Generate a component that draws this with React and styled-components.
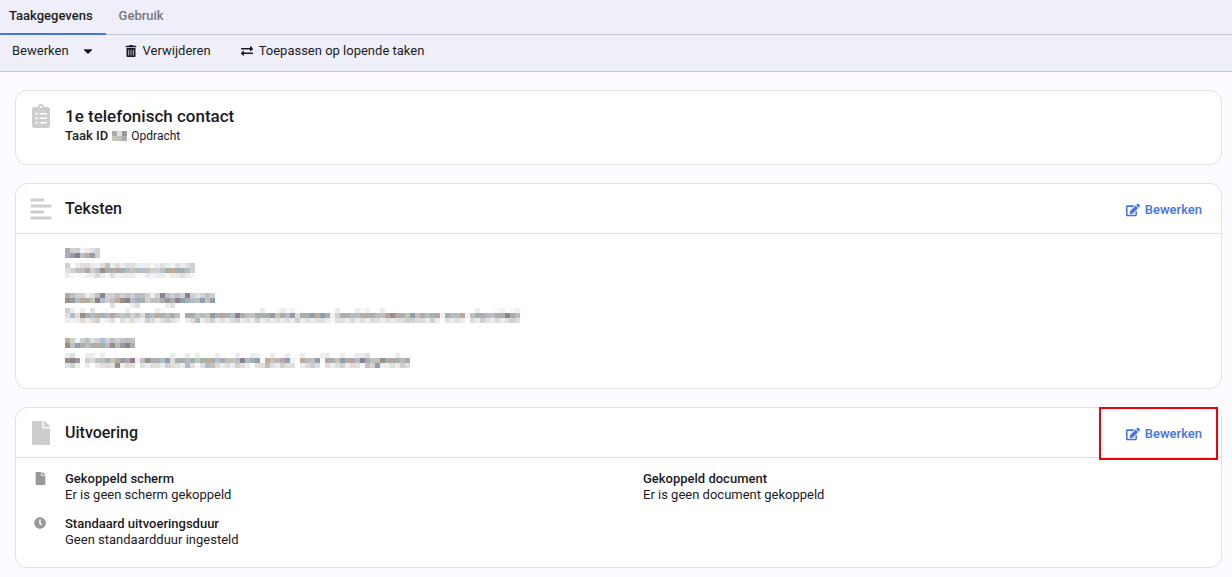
import React from "react";
import styled, { createGlobalStyle } from "styled-components";
import {
  FaAlignLeft,
  FaCaretDown,
  FaClipboardList,
  FaClock,
  FaEdit,
  FaExchangeAlt,
  FaFile,
  FaTrashAlt,
} from "react-icons/fa";

const GlobalStyle = createGlobalStyle`
  * {
    box-sizing: border-box;
  }

  body {
    margin: 0;
    background: #fdfbff;
    color: #1b1b1f;
    font-family: Roboto, "Liberation Sans", sans-serif;
    font-size: 13px;
    line-height: 16px;
  }
`;

const TabBar = styled.nav`
  display: flex;
  height: 35px;
  background: #efeffa;
  border-bottom: 1px solid #c5c6d0;
`;

const Tab = styled.button`
  height: 35px;
  padding: 0 13px 2px;
  border: 0;
  border-bottom: 2px solid ${({ $active }) => ($active ? "#4573df" : "transparent")};
  background: none;
  color: ${({ $active }) => ($active ? "#1b1b1f" : "#77777a")};
  font: inherit;
  font-weight: 500;
  cursor: pointer;

  &:first-child {
    padding-left: 9px;
  }
`;

const Toolbar = styled.div`
  display: flex;
  align-items: center;
  gap: 30px;
  height: 37px;
  padding: 0 12px 4px;
  background: #efeffa;
  border-bottom: 1px solid #c5c6d0;
`;

const ToolButton = styled.button`
  display: flex;
  align-items: center;
  gap: ${({ $gap }) => $gap || 6}px;
  padding: 0;
  border: 0;
  background: none;
  color: inherit;
  font: inherit;
  cursor: pointer;
`;

const Page = styled.main`
  display: flex;
  flex-direction: column;
  gap: 18px;
  padding: 18px 10px 9px 15px;
`;

const Card = styled.section`
  position: relative;
  background: #fff;
  border: 1px solid #e1e1ec;
  border-radius: 12px;
`;

const CardHeader = styled.header`
  display: flex;
  align-items: center;
  height: 50px;
  padding-right: 19px;
  border-bottom: 1px solid #e1e1ec;
`;

const IconCell = styled.span`
  display: flex;
  flex: none;
  justify-content: center;
  width: 49px;
  color: #cdcdcd;
`;

const FieldIcon = styled(IconCell)`
  padding: 1px 1px 0 0;
  color: #999;
`;

const Title = styled.h2`
  flex: 1;
  margin: 0;
  font-size: ${({ $large }) => ($large ? 17 : 16)}px;
  font-weight: 500;
  line-height: 20px;
`;

const EditButton = styled.button`
  display: flex;
  align-items: center;
  gap: 5px;
  padding: 3px 0 0;
  border: 0;
  background: none;
  color: #4573df;
  font: inherit;
  font-weight: 500;
  cursor: pointer;
`;

const Summary = styled.div`
  display: flex;
  padding: 13px 0 18px;
`;

const SummaryText = styled.div`
  padding-top: 2px;
`;

const Meta = styled.div`
  display: flex;
  align-items: center;
  gap: 4px;
  font-size: 12px;
  line-height: 20px;
`;

const Strong = styled.strong`
  font-size: 13px;
  font-weight: 500;
`;

const TextFields = styled.div`
  display: flex;
  flex-direction: column;
  gap: 15px;
  padding: 14px 16px 20px 49px;
`;

const TextField = styled.div`
  display: flex;
  flex-direction: column;
  gap: 5px;
`;

const Mosaic = styled.svg`
  display: block;
  overflow: visible;
`;

const Fields = styled.div`
  display: grid;
  grid-template-columns: 49px 1fr 1fr;
  row-gap: 13px;
  padding: 13px 0 19px;
`;

const Field = styled.dl`
  margin: 0;

  dt {
    font-weight: 500;
  }

  dd {
    margin: 0;
  }
`;

const Highlight = styled.div`
  position: absolute;
  top: -1px;
  right: 3px;
  width: 119px;
  height: 53px;
  border: 2px solid #f00000;
  pointer-events: none;
`;

const TONES = {
  w: "#fbf7f2",
  c: "#edf2f8",
  1: "#ececec",
  2: "#dfdfe0",
  3: "#cfd0d2",
  4: "#c0c0c0",
  5: "#adadae",
  6: "#99999d",
  B: "#b3bdca",
  b: "#8f9fb0",
  T: "#e2dad4",
  t: "#c0aa98",
  p: "#8d8090",
  r: "#b8a5a3",
  g: "#a3b1b1",
  n: "#9a9082",
  y: "#c8c4b4",
};

const CELL = 5;

// redacted text, one character per block
const Redacted = ({ rows, lines = 2 }) => (
  <Mosaic
    width={rows[0].length * CELL}
    height={lines * CELL}
    shapeRendering="crispEdges"
    aria-hidden="true"
  >
    {rows.map((row, y) =>
      [...row].map((tone, x) =>
        TONES[tone] ? (
          <rect
            key={`${x}-${y}`}
            x={x * CELL}
            y={y * CELL}
            width={CELL}
            height={CELL}
            fill={TONES[tone]}
          />
        ) : null
      )
    )}
  </Mosaic>
);

const redactedId = ["526", "y45"];

const redactedFields = [
  {
    label: ["533c123", "5bp4tb3"],
    value: [
      "3.12T1c241T1221c1w121c2123",
      "2344r3Bng5rgByBB4334gtg5B3",
      "1w.wc1T1w2c111ww1c11w1121w",
    ],
  },
  {
    label: [
      "5433124p3343y3B4313p4343p32343",
      "n6BtgypB34tnpB5g344565pbgB4byb",
      ".........2...12.....12........",
    ],
    value: [
      "31.1.2..w...1.....1w...................1..w1wc........1...1wc..1..................1...wc.wc",
      "2BTngBtgBrByB34T5BtgB54.rgyByb5rgBp5445g56y5BbTg5btb5c355BBtg5B4rnr5yb45Bgrc5BBtc4g5B4g5p5B",
      "1c1T1T3w12w21T1c3T12321.1TB1T3121T3121312121213121221w221T121T212122332T131.2121.21321T1232",
    ],
  },
  {
    label: ["t3c3423B3434B4", "n4b5BgtgBnB6p5"],
    value: [
      "12..11.1.............1..1.1...1...1..1c..1..1.w1...11..1..112.....1..",
      "np6.3T44gytbrpc4n5gBbTg5Bgygt5B54yBpBgb.tyBrbc.tB4b.rgyb5rBpg44ngrgBr",
      "231.1.12T2n1T2.212213T21B2w2B4T121321.2T421322.1T32.T1231T2w436112132",
    ],
  },
];

const App = () => {
  return (
    <>
      <GlobalStyle />
      <TabBar>
        <Tab $active>Taakgegevens</Tab>
        <Tab>Gebruik</Tab>
      </TabBar>
      <Toolbar>
        <ToolButton $gap={12}>
          Bewerken
          <FaCaretDown size={14} />
        </ToolButton>
        <ToolButton>
          <FaTrashAlt size={12} />
          Verwijderen
        </ToolButton>
        <ToolButton>
          <FaExchangeAlt size={12} />
          Toepassen op lopende taken
        </ToolButton>
      </Toolbar>
      <Page>
        <Card>
          <Summary>
            <IconCell>
              <FaClipboardList size={24} />
            </IconCell>
            <SummaryText>
              <Title $large>1e telefonisch contact</Title>
              <Meta>
                <Strong>Taak ID</Strong>
                <Redacted rows={redactedId} />
                <span>Opdracht</span>
              </Meta>
            </SummaryText>
          </Summary>
        </Card>

        <Card>
          <CardHeader>
            <IconCell>
              <FaAlignLeft size={24} />
            </IconCell>
            <Title>Teksten</Title>
            <EditButton>
              <FaEdit size={14} />
              Bewerken
            </EditButton>
          </CardHeader>
          <TextFields>
            {redactedFields.map((field, i) => (
              <TextField key={i}>
                <Redacted rows={field.label} />
                <Redacted rows={field.value} lines={3} />
              </TextField>
            ))}
          </TextFields>
        </Card>

        <Card>
          <CardHeader>
            <IconCell>
              <FaFile size={24} />
            </IconCell>
            <Title>Uitvoering</Title>
            <EditButton>
              <FaEdit size={14} />
              Bewerken
            </EditButton>
          </CardHeader>
          <Fields>
            <FieldIcon>
              <FaFile size={13} />
            </FieldIcon>
            <Field>
              <dt>Gekoppeld scherm</dt>
              <dd>Er is geen scherm gekoppeld</dd>
            </Field>
            <Field>
              <dt>Gekoppeld document</dt>
              <dd>Er is geen document gekoppeld</dd>
            </Field>
            <FieldIcon>
              <FaClock size={12} />
            </FieldIcon>
            <Field>
              <dt>Standaard uitvoeringsduur</dt>
              <dd>Geen standaardduur ingesteld</dd>
            </Field>
          </Fields>
          <Highlight />
        </Card>
      </Page>
    </>
  );
};

export default App;
